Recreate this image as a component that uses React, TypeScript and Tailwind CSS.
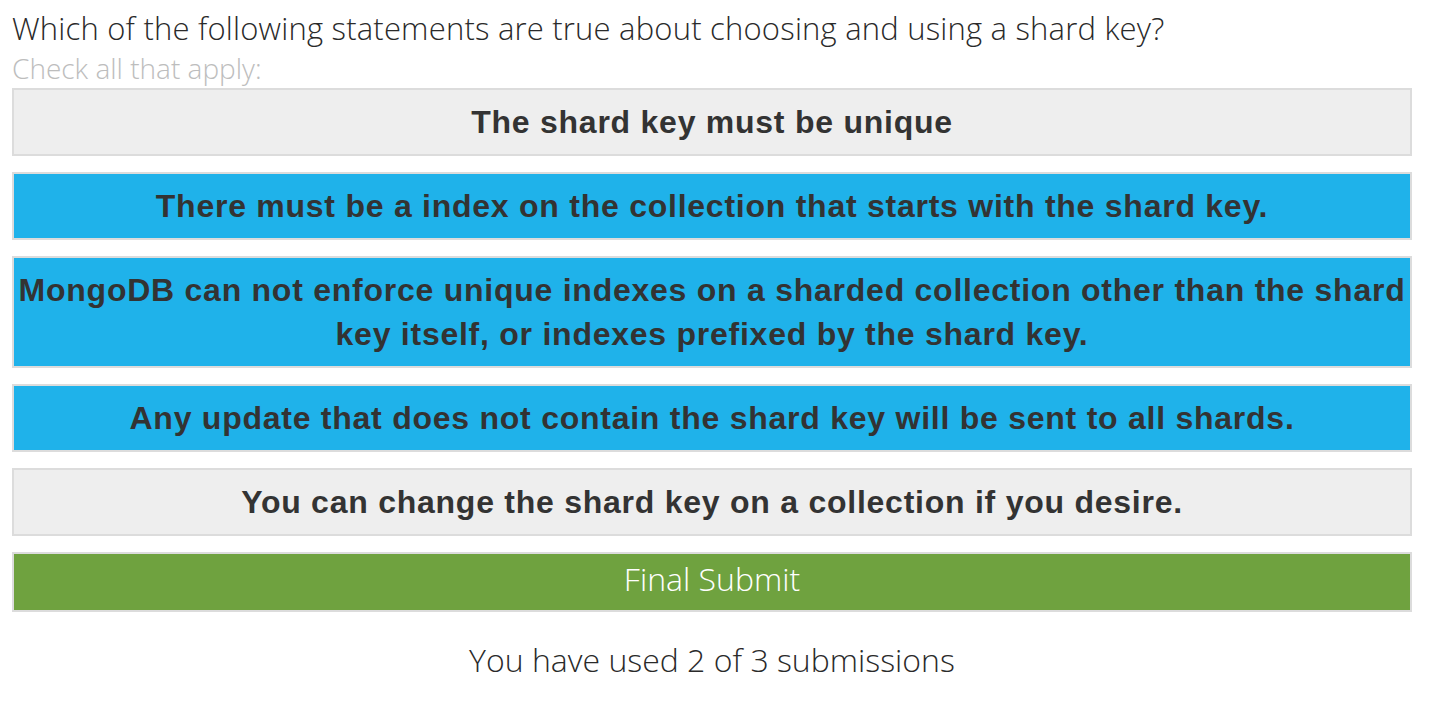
const options = [
  { text: "The shard key must be unique", picked: false },
  { text: "There must be a index on the collection that starts with the shard key.", picked: true },
  {
    text: "MongoDB can not enforce unique indexes on a sharded collection other than the shard key itself, or indexes prefixed by the shard key.",
    picked: true,
  },
  { text: "Any update that does not contain the shard key will be sent to all shards.", picked: true },
  { text: "You can change the shard key on a collection if you desire.", picked: false },
];

export default function App() {
  return (
    <div className="min-h-screen bg-white font-['Open_Sans','Liberation_Sans',sans-serif]">
      <div className="ml-3 w-[1400px] pt-[7px]">
        <h1 className="text-[31px] font-light leading-[42px] tracking-[0.2px] text-[#2a2a2a]">
          Which of the following statements are true about choosing and using a shard key?
        </h1>
        <p className="text-[28px] font-light leading-[39px] text-[#bdbdbd]">Check all that apply:</p>

        <div className="flex flex-col gap-[16px]">
          {options.map((o) => (
            <div
              key={o.text}
              className={
                "border-2 border-[#dcdcdc] px-[3px] py-[10px] text-center font-['Liberation_Sans',sans-serif] text-[32px] font-bold leading-[44px] tracking-[0.75px] text-[#333] " +
                (o.picked ? "bg-[#1fb2ea]" : "bg-[#eeeeee]")
              }
            >
              {o.text}
            </div>
          ))}
          <button className="h-[60px] w-full border-2 border-[#dcdcdc] bg-[#6fa23f] pb-[6px] text-[32px] font-light text-white">
            Final Submit
          </button>
        </div>

        <p className="mt-[28px] text-center text-[32px] font-light leading-[40px] text-[#2a2a2a]">
          You have used 2 of 3 submissions
        </p>
      </div>
    </div>
  );
}
